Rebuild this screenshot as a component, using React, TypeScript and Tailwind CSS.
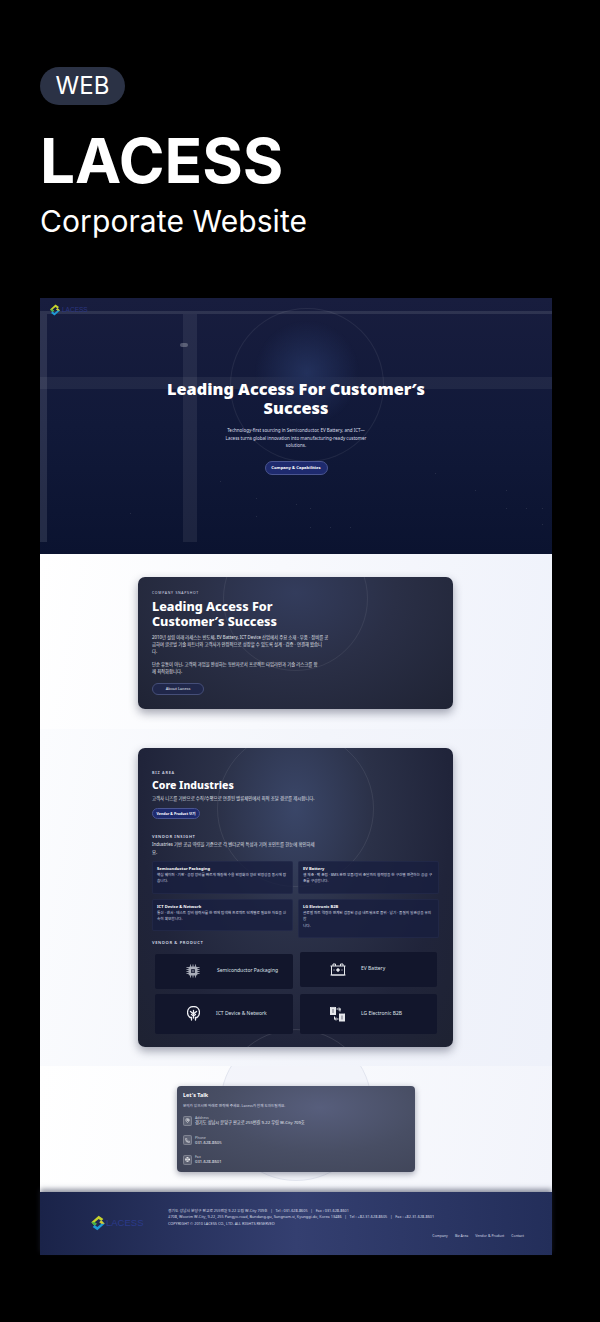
import React from 'react';
import { MapPin, Phone, Globe } from 'lucide-react';

const sans = "font-['Inter','Noto_Sans_CJK_KR',sans-serif]";
const site = "font-['Noto_Sans','Noto_Sans_CJK_KR',sans-serif]";

const Logo: React.FC<{ size: number }> = ({ size }) => (
  <svg width={size} height={size} viewBox="0 0 24 24" fill="none" className="shrink-0">
    <path d="M13 1 L2 11 L7 16 L10 13 L7 11 L13 6 L17 9 L20 6 Z" fill="#c6d32c" />
    <path d="M2 11 L7 16 L10 13 L7 11 Z" fill="#3fae49" />
    <path d="M11 23 L22 13 L17 8 L14 11 L17 13 L11 18 L7 15 L4 18 Z" fill="#1d9ad6" />
    <path d="M22 13 L17 8 L14 11 L17 13 Z" fill="#d9c92a" />
  </svg>
);

const ChipIcon = () => (
  <svg width="14" height="14" viewBox="0 0 28 28" fill="none" className="shrink-0">
    <path d="M1 7h26M1 11h26M1 15h26M1 19h26M9 1v26M14 1v26M19 1v26" stroke="#9498a5" strokeWidth="2" />
    <rect x="5" y="5" width="18" height="18" rx="3" fill="#a9adb9" />
    <rect x="10" y="10" width="8" height="8" rx="1" fill="#2a2e44" />
    <circle cx="14" cy="14" r="1.5" fill="#a9adb9" />
  </svg>
);

const BatteryIcon = () => (
  <svg width="16" height="13" viewBox="0 0 32 26" fill="none" stroke="#e5e7eb" strokeWidth="2" className="shrink-0">
    <path d="M1 6h30M3 6v18h26V6M1 24h30" />
    <path d="M6 6V2h5v4M21 6V2h5v4" />
    <path d="M16 10l-4 4 4 4 4-4z" fill="#e5e7eb" strokeWidth="0.5" />
    <path d="M7 14h2M23 14h2" />
  </svg>
);

const BrainIcon = () => (
  <svg width="13" height="15" viewBox="0 0 26 30" fill="none" stroke="#f0f1f5" strokeWidth="2.6" strokeLinecap="round" className="shrink-0">
    <path d="M9 28v-5H6c-3-2-5-6-5-10C1 6 6 1 13 1s12 5 12 12c0 4-2 8-5 10h-3v5" />
    <path d="M13 24V9M13 16l-6-5M13 16l6-5M13 20l-4-3M13 20l4-3" />
  </svg>
);

const SwapIcon = () => (
  <svg width="15" height="16" viewBox="0 0 30 32" fill="none" stroke="#e5e7eb" strokeWidth="2" className="shrink-0">
    <rect x="1" y="3" width="10" height="14" fill="#e5e7eb" />
    <rect x="19" y="16" width="10" height="14" fill="#e5e7eb" />
    <path d="M4 3V1M8 3V1M22 16v-2M26 16v-2M6 6v8M24 19v8" stroke="#4b4f63" strokeWidth="1.5" />
    <path d="M13 6h7v5M18 3l3 3-3 3" stroke="#e5e7eb" />
    <path d="M17 26h-8v-5M12 23l-3 3 3 3" stroke="#e5e7eb" />
  </svg>
);

const insights = [
  {
    title: 'Semiconductor Packaging',
    lines: ['핵심 웨이퍼 · 기판 · 공정 장비를 빠르게 매칭해 수율 안정화와 양산 안정성을 동시에 잡', '습니다.'],
    height: 'h-[33px]',
  },
  {
    title: 'EV Battery',
    lines: ['셀 제조 · 팩 조립 · BMS 관련 부품/장비 조달까지 협력망을 한 구간별 연결하는 공급 구', '조를 구성합니다.'],
    height: 'h-[33px]',
  },
  {
    title: 'ICT Device & Network',
    lines: ['통신 · 센서 · 테스트 장비 협력사를 한 번에 탐색해 프로젝트 단계별로 필요한 자원을 신', '속히 확보합니다.'],
    height: 'h-[32px]',
  },
  {
    title: 'LG Electronic B2B',
    lines: ['글로벌 파트 역량과 연계된 검증된 공급 네트워크로 품위 · 납기 · 품질의 일관성을 유지', '합', '니다.'],
    height: 'h-[39px]',
  },
];

const contacts = [
  { icon: MapPin, label: 'Address', value: '경기도 성남시 분당구 판교로 255번길 9-22 우림 W-City 709호' },
  { icon: Phone, label: 'Phone', value: '031-628-8605' },
  { icon: Globe, label: 'Fax', value: '031-628-8601' },
];

// faint particles at the bottom of the hero
const stars = [
  [180, 183], [216, 200], [256, 206], [216, 218], [270, 210], [290, 229], [310, 229], [270, 229],
  [395, 175], [435, 192], [466, 192], [466, 210], [486, 210], [502, 210], [502, 226], [90, 215],
];

export default function App() {
  return (
    <div className={`w-[600px] h-[1322px] bg-black pt-[67px] overflow-hidden ${sans}`}>
      <div className="px-10">
        <div className="w-[85px] h-[38px] rounded-full bg-[#2b3245] flex items-center justify-center text-white text-2xl">WEB</div>
        <h1 className="mt-[17px] text-white text-[62px] leading-[77px] font-bold">LACESS</h1>
        <p className="text-white text-[30px] leading-[36px] mt-[4px] tracking-[0.003em]">Corporate Website</p>
      </div>

      <div className={`mx-10 mt-[59px] w-[512px] ${site}`}>
        {/* Hero */}
        <section className="relative h-[256px] overflow-hidden bg-[linear-gradient(180deg,#181d3e_0%,#111939_50%,#0b1330_100%)] flex flex-col items-center pt-[82px]">
          <div className="absolute left-0 right-0 top-[13px] h-[3px] bg-white/10" />
          <div className="absolute left-0 top-[16px] w-[7px] h-[228px] bg-white/10" />
          <div className="absolute left-[143px] top-[16px] w-[14px] h-[228px] bg-white/[0.07]" />
          <div className="absolute left-[140px] top-[45px] w-[8px] h-[4px] rounded-full bg-white/25" />
          <div className="absolute left-0 right-0 top-[79px] h-[12px] bg-white/[0.06]" />
          <div className="absolute left-[190px] top-[10px] w-[154px] h-[154px] rounded-full border border-white/[0.07] bg-[radial-gradient(circle_at_50%_42%,#23315c_0%,transparent_45%)]" />
          {stars.map(([x, y]) => (
            <div key={`${x}-${y}`} className="absolute w-[1px] h-[1px] bg-white/10" style={{ left: x, top: y }} />
          ))}
          <div className="absolute left-[9px] top-[6px] flex items-center gap-[1px]">
            <Logo size={12} />
            <span className="text-[6.5px] text-[#2b3580] font-['Liberation_Sans',sans-serif]">LACESS</span>
          </div>
          <h2 className="relative text-white text-[16.3px] leading-[18.5px] font-black text-center w-[300px]">
            Leading Access For Customer′s<br />Success
          </h2>
          <p className="relative mt-[10px] text-[4.5px] leading-[7.6px] text-center text-[#d9dee9]">
            Technology-first sourcing in Semiconductor, EV Battery, and ICT—<br />
            Lacess turns global innovation into manufacturing-ready customer<br />
            solutions.
          </p>
          <button className="relative mt-[11px] w-[63px] h-[14px] rounded-full bg-[#1e2a6e] border border-[#4a5590] text-white text-[4.2px] font-bold">
            Company &amp; Capabilities
          </button>
        </section>

        {/* Company snapshot */}
        <section className="relative h-[175px] bg-[linear-gradient(100deg,#ffffff_0%,#f8f9fd_45%,#eff2fb_100%)] pt-[23px] pl-[98px]">
          <div className="relative w-[315px] h-[132px] rounded-[7px] overflow-hidden shadow-[0_4px_10px_rgba(30,35,60,0.4)] bg-[radial-gradient(ellipse_at_50%_12%,#333c5c_0%,#2a2f46_45%,#1f2334_100%)] px-[14px] pt-[13px] text-white">
            <div className="absolute left-[85px] top-[-51px] w-[145px] h-[145px] rounded-full border border-white/[0.07]" />
            <p className="relative text-[3.5px] leading-[5px] tracking-[0.2em] text-[#d5d9e4]">COMPANY SNAPSHOT</p>
            <h3 className="relative mt-[4px] text-[12.6px] leading-[15px] font-extrabold">Leading Access For<br />Customer′s Success</h3>
            <p className="relative mt-[4.5px] text-[4.35px] leading-[7px] text-[#e0e3ea]">
              2010년 설립 이래 라세스는 반도체, EV Battery, ICT Device 산업에서 주요 소재 · 부품 · 장비를 공<br />
              급하며 글로벌 기술 파트너와 고객사가 안정적으로 성장할 수 있도록 설계 · 검증 · 연결해 왔습니<br />
              다.
            </p>
            <p className="relative mt-[6px] text-[4.35px] leading-[7px] text-[#e0e3ea]">
              단순 유통이 아닌, 고객의 과업을 완성하는 동반자로서 프로젝트 타임라인과 기술 리스크를 함<br />
              께 최적화합니다.
            </p>
            <button className="relative block mt-[8.5px] w-[52px] h-[12px] rounded-full bg-[#20274a] border border-[#454e78] text-[4px] text-[#e6e8f0]">About Lacess</button>
          </div>
        </section>

        {/* Core industries */}
        <section className="relative h-[337px] bg-[linear-gradient(100deg,#fbfcfe_0%,#f3f5fb_50%,#eef1fa_100%)] pt-[19px] pl-[98px]">
          <div className="relative w-[315px] h-[299px] rounded-[7px] overflow-hidden shadow-[0_4px_10px_rgba(30,35,60,0.4)] bg-[radial-gradient(ellipse_at_50%_20%,#3a4668_0%,#2b3148_35%,#20243a_70%,#1e2232_100%)] px-[14px] pt-[22px] text-white">
            <div className="absolute left-[79px] top-[-18px] w-[157px] h-[157px] rounded-full border border-white/[0.08]" />
            <div className="absolute left-[82px] top-[281px] w-[152px] h-[152px] rounded-full border border-white/10" />
            <p className="relative text-[3.8px] leading-[5px] tracking-[0.2em] font-semibold text-[#d5d9e4]">BIZ AREA</p>
            <h3 className="relative mt-[2px] text-[10.5px] leading-[16px] font-extrabold">Core Industries</h3>
            <p className="relative mt-[2px] text-[4.4px] leading-[7px] text-[#e0e3ea]">고객사 니즈를 기반으로 수직/수평으로 연결된 밸류체인에서 최적 조달 경로를 제시합니다.</p>
            <button className="relative block mt-[6px] w-[48px] h-[11px] rounded-full bg-[#1e2a6e] border border-[#4a5590] text-[3.6px] font-bold">Vendor &amp; Product 보기</button>
            <p className="relative mt-[15px] text-[4.1px] leading-[5px] tracking-[0.15em] font-semibold text-[#d5d9e4]">VENDOR INSIGHT</p>
            <p className="relative mt-[0.5px] text-[4.4px] leading-[8px] text-[#e0e3ea]">
              Industries 기반 공급 역량을 기준으로 각 벤더군의 특성과 기여 포인트를 한눈에 확인하세<br />요.
            </p>
            <div className="relative mt-[5px] grid grid-cols-2 gap-x-[5px] gap-y-[5px] items-start">
              {insights.map((item) => (
                <div key={item.title} className={`rounded-[2px] bg-[#181e3e]/80 border border-[#2a3050]/50 px-[4px] pt-[3px] ${item.height}`}>
                  <p className="text-[4.1px] leading-[7px] font-bold">{item.title}</p>
                  <p className="text-[3.65px] leading-[6.5px] text-[#d5d9e4]">
                    {item.lines.map((line, i) => (
                      <span key={i} className="block whitespace-nowrap">{line}</span>
                    ))}
                  </p>
                </div>
              ))}
            </div>
            <p className="relative mt-[2.5px] text-[4.1px] leading-[5px] tracking-[0.15em] font-semibold text-[#d5d9e4]">VENDOR &amp; PRODUCT</p>
            <div className="relative mt-[6.5px] ml-[3px] grid grid-cols-[138px_137px] gap-x-[7px] gap-y-[5px] grid-rows-[37px_40px]">
              <div className="self-end h-[35px] rounded-[2px] bg-[#12162c] flex items-center pl-[31px] gap-[17px]">
                <ChipIcon />
                <span className="text-[5px] text-[#dfe2ea]">Semiconductor Packaging</span>
              </div>
              <div className="self-start h-[35px] rounded-[2px] bg-[#12162c] flex items-center pl-[30px] gap-[15px]">
                <BatteryIcon />
                <span className="text-[5px] text-[#dfe2ea]">EV Battery</span>
              </div>
              <div className="rounded-[2px] bg-[#12162c] flex items-center pl-[32px] gap-[16px]">
                <BrainIcon />
                <span className="text-[5px] text-[#dfe2ea]">ICT Device &amp; Network</span>
              </div>
              <div className="rounded-[2px] bg-[#12162c] flex items-center pl-[30px] gap-[16px]">
                <SwapIcon />
                <span className="text-[5px] text-[#dfe2ea]">LG Electronic B2B</span>
              </div>
            </div>
          </div>
        </section>

        {/* Contact */}
        <section className="relative h-[126px] overflow-hidden bg-[linear-gradient(100deg,#ffffff_0%,#f9fafd_50%,#f2f4fb_100%)] pt-[20px] pl-[137px]">
          <div className="absolute left-[180px] top-[-37px] w-[152px] h-[152px] rounded-full border border-[#e2e5ef] bg-[#eef0f8]/60" />
          <div className="relative w-[238px] h-[86px] rounded-[4px] overflow-hidden shadow-[0_2px_6px_rgba(30,35,60,0.4)] bg-[radial-gradient(ellipse_at_60%_25%,#575e7c_0%,#484e64_50%,#3e4356_100%)] px-[6px] pt-[6px] text-white">
            <p className="text-[5.4px] leading-[7px] font-bold">Let′s Talk</p>
            <p className="mt-[4px] text-[3.6px] leading-[6px] text-[#d5d9e4]">문의가 있으시면 아래로 연락해 주세요. Lacess가 함께 도와드릴게요.</p>
            <div className="mt-[6px] flex flex-col gap-[8.5px]">
              {contacts.map((c) => (
                <div key={c.label} className="flex items-center gap-[3px]">
                  <div className="w-[9px] h-[10px] rounded-[2px] bg-white/15 border border-white/20 flex items-center justify-center">
                    <c.icon size={5} strokeWidth={2.4} color="#ffffff" />
                  </div>
                  <div>
                    <p className="text-[3.6px] leading-[5px] text-[#c8ccd8]">{c.label}</p>
                    <p className="text-[4.2px] leading-[6px] text-[#e6e8f0]">{c.value}</p>
                  </div>
                </div>
              ))}
            </div>
          </div>
        </section>

        {/* Footer */}
        <footer className="relative h-[63px] bg-[linear-gradient(90deg,#1a2349_0%,#343f70_50%,#232e5a_100%)] shadow-[0_-3px_5px_rgba(40,45,70,0.5)] flex pl-[50px]">
          <div className="mt-[23px] w-[53px] flex items-center self-start">
            <Logo size={16} />
            <span className="text-[9.5px] leading-[14px] text-[#2b3a8a] font-['Liberation_Sans',sans-serif]">LACESS</span>
          </div>
          <div className="ml-[25px] mt-[16px] text-[3.8px] leading-[6.4px] text-[#d5d9e4]">
            <p>경기도 성남시 분당구 판교로 255번길 9-22 우림 W-City 709호 &nbsp;&nbsp;|&nbsp;&nbsp; Tel : 031-628-8605 &nbsp;&nbsp;|&nbsp;&nbsp; Fax : 031-628-8601</p>
            <p>#708, Woorim W-City, 9-22, 255 Pangyo-road, Bundang-gu, Sungnam-si, Kyunggi-do, Korea 13486 &nbsp;&nbsp;|&nbsp;&nbsp; Tel : +82-31-628-8605 &nbsp;&nbsp;|&nbsp;&nbsp; Fax : +82-31-628-8601</p>
            <p>COPYRIGHT © 2010 LACESS CO., LTD. ALL RIGHTS RESERVED</p>
          </div>
          <div className="absolute right-[28px] bottom-[17px] flex gap-[7px] text-[3.5px] text-[#d5d9e4]">
            <span>Company</span>
            <span>Biz Area</span>
            <span>Vendor &amp; Product</span>
            <span>Contact</span>
          </div>
        </footer>
      </div>
    </div>
  );
}
